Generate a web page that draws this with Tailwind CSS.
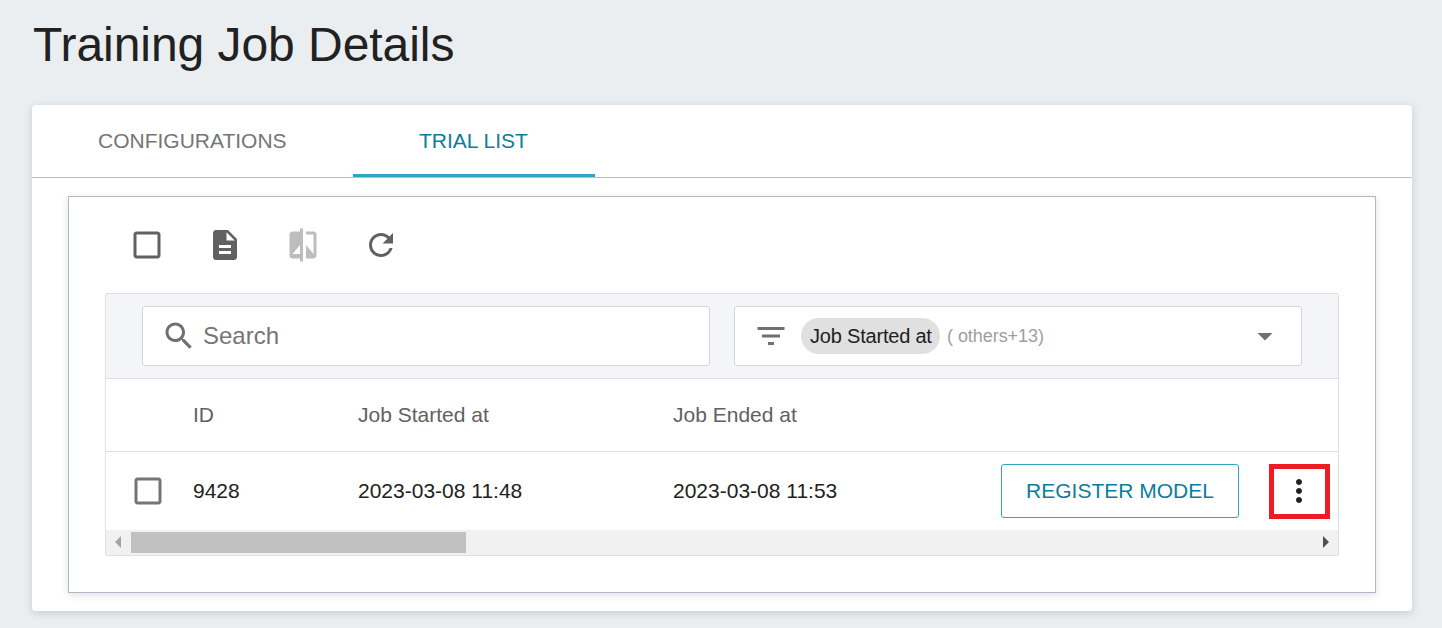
<!DOCTYPE html>
<html lang="en">
<head>
  <meta charset="UTF-8">
  <meta name="viewport" content="width=device-width, initial-scale=1.0">
  <title>Training Job Details</title>
  <script src="https://cdn.jsdelivr.net/npm/@tailwindcss/browser@4"></script>
</head>
<body class="h-[628px] overflow-hidden bg-[#eaeef1] font-['Liberation_Sans',Arial,sans-serif] text-[#212121]">
  <div class="pl-[32px] pr-[30px]">
    <h1 class="h-[105px] pt-[16px] pl-px text-[48px] leading-[58px] font-normal tracking-[-0.05px]">Training Job Details</h1>

    <div class="h-[506px] bg-white rounded-[4px] shadow-[0_2px_8px_rgba(0,0,0,0.15)]">
      <!-- tabs -->
      <div class="flex h-[73px] border-b border-[#bdbdbd] text-[21px]">
        <div class="flex items-center w-[321px] h-[72px] px-[66px] text-[#757575]">CONFIGURATIONS</div>
        <div class="flex items-center w-[242px] h-[72px] px-[66px] text-[#0b7d9c] border-b-[3px] border-[#2aa8c4] pt-[3px]">TRIAL LIST</div>
      </div>

      <div class="px-[36px] pt-[18px]">
        <div class="h-[397px] border border-[#b0b7c6] shadow-[0_2px_8px_rgba(0,0,0,0.12)] px-[36px]">
          <!-- toolbar -->
          <div class="flex items-center gap-[42px] h-[96px] pl-[24px]">
            <svg class="w-[36px] h-[36px] fill-[#616161]" viewBox="0 0 24 24"><path d="M19 5v14H5V5h14m0-2H5c-1.100 0-2 .9-2 2v14c0 1.100.9 2 2 2h14c1.100 0 2-.9 2-2V5c0-1.100-.9-2-2-2z"/></svg>
            <svg class="w-[36px] h-[36px] fill-[#616161]" viewBox="0 0 24 24"><path d="M14 2H6c-1.100 0-1.990.9-1.990 2L4 20c0 1.100.89 2 1.990 2H18c1.100 0 2-.9 2-2V8l-6-6zm2 16H8v-2h8v2zm0-4H8v-2h8v2zm-3-5V3.500L18.500 9H13z"/></svg>
            <svg class="w-[36px] h-[36px] fill-[#bdbdbd]" viewBox="0 0 24 24"><path d="M10 3H5c-1.100 0-2 .9-2 2v14c0 1.100.9 2 2 2h5v2h2V1h-2v2zm0 15H5l5-6v6zm9-15h-5v2h5v13l-5-6v9h5c1.100 0 2-.9 2-2V5c0-1.100-.9-2-2-2z"/></svg>
            <svg class="w-[36px] h-[36px] fill-[#616161]" viewBox="0 0 24 24"><path d="M17.650 6.350C16.200 4.900 14.210 4 12 4c-4.420 0-7.990 3.580-7.990 8s3.570 8 7.990 8c3.730 0 6.840-2.550 7.730-6h-2.080c-.82 2.330-3.040 4-5.650 4-3.310 0-6-2.690-6-6s2.690-6 6-6c1.660 0 3.140.69 4.220 1.780L13 11h7V4l-2.350 2.350z"/></svg>
          </div>

          <!-- grid -->
          <div class="h-[263px] border border-[#e0e0e0] rounded-[2px] overflow-hidden">
            <!-- filter band -->
            <div class="flex gap-[24px] h-[85px] px-[36px] pt-[12px] bg-[#f3f5f9] border-b border-[#e0e0e0]">
              <div class="flex items-center w-[568px] h-[60px] bg-white border border-[#d6d6d6] rounded-[3px] pl-[18px] text-[24px] text-[#757575]">
                <svg class="w-[36px] h-[36px] fill-[#707070] mr-[6px]" viewBox="0 0 24 24"><path d="M15.500 14h-.79l-.28-.27C15.410 12.590 16 11.110 16 9.500 16 5.910 13.090 3 9.500 3S3 5.910 3 9.500 5.910 16 9.500 16c1.610 0 3.090-.59 4.230-1.570l.27.28v.79l5 4.990L20.490 19l-4.990-5zm-6 0C7.010 14 5 11.990 5 9.500S7.010 5 9.500 5 14 7.010 14 9.500 11.990 14 9.500 14z"/></svg>
                <span>Search</span>
              </div>
              <div class="flex items-center w-[568px] h-[60px] bg-white border border-[#d6d6d6] rounded-[3px] pl-[18px] pr-[18px]">
                <svg class="w-[36px] h-[36px] fill-[#707070] mr-[12px]" viewBox="0 0 24 24"><path d="M10 18h4v-2h-4v2zM3 6v2h18V6H3zm3 7h12v-2H6v2z"/></svg>
                <span class="flex items-center w-[139px] h-[36px] pl-[9px] rounded-[18px] bg-[#e0e0e0] text-[20px] tracking-[-0.2px] text-[#212121]">Job Started at</span>
                <span class="ml-[7px] text-[18px] tracking-[-0.05px] text-[#9e9e9e]">( others+13)</span>
                <svg class="ml-auto w-[36px] h-[36px] fill-[#707070]" viewBox="0 0 24 24"><path d="M7 10l5 5 5-5z"/></svg>
              </div>
            </div>

            <!-- table header -->
            <div class="grid grid-cols-[87px_165px_315px_1fr] items-center h-[73px] border-b border-[#e0e0e0] text-[#616161] text-[21px]">
              <div></div>
              <div>ID</div>
              <div>Job Started at</div>
              <div>Job Ended at</div>
            </div>

            <!-- row -->
            <div class="grid grid-cols-[87px_165px_315px_328px_238px_30px_61px] items-center h-[78px] text-[21px]">
              <div class="pl-[24px]">
                <svg class="w-[36px] h-[36px] fill-[#757575]" viewBox="0 0 24 24"><path d="M19 5v14H5V5h14m0-2H5c-1.100 0-2 .9-2 2v14c0 1.100.9 2 2 2h14c1.100 0 2-.9 2-2V5c0-1.100-.9-2-2-2z"/></svg>
              </div>
              <div>9428</div>
              <div>2023-03-08 11:48</div>
              <div>2023-03-08 11:53</div>
              <div class="flex items-center justify-center h-[54px] border border-[#2aa8c4] rounded-[3px] text-[#0b7d9c]">REGISTER MODEL</div>
              <div></div>
              <div class="flex items-center justify-center h-[55px] pr-px border-[5px] border-[#ed1c24]">
                <svg class="w-[36px] h-[36px] fill-[#212121]" viewBox="0 0 24 24"><path d="M12 8c1.100 0 2-.9 2-2s-.9-2-2-2-2 .9-2 2 .9 2 2 2zm0 2c-1.100 0-2 .9-2 2s.9 2 2 2 2-.9 2-2-.9-2-2-2zm0 6c-1.100 0-2 .9-2 2s.9 2 2 2 2-.9 2-2-.9-2-2-2z"/></svg>
              </div>
            </div>

            <!-- scrollbar -->
            <div class="flex items-center h-[25px] bg-[#f1f1f1] pb-[1px]">
              <div class="flex items-center justify-center w-[25px] h-[21px] pr-[2px]">
                <svg class="w-[8px] h-[12px] fill-[#a3a3a3]" viewBox="0 0 8 12"><path d="M7 0v12L1 6z"/></svg>
              </div>
              <div class="w-[335px] h-[21px] bg-[#c1c1c1]"></div>
              <div class="flex items-center justify-center w-[25px] h-[21px] ml-auto pl-[1px]">
                <svg class="w-[8px] h-[12px] fill-[#505050]" viewBox="0 0 8 12"><path d="M1 0v12l6-6z"/></svg>
              </div>
            </div>
          </div>
        </div>
      </div>
    </div>
  </div>
</body>
</html>
